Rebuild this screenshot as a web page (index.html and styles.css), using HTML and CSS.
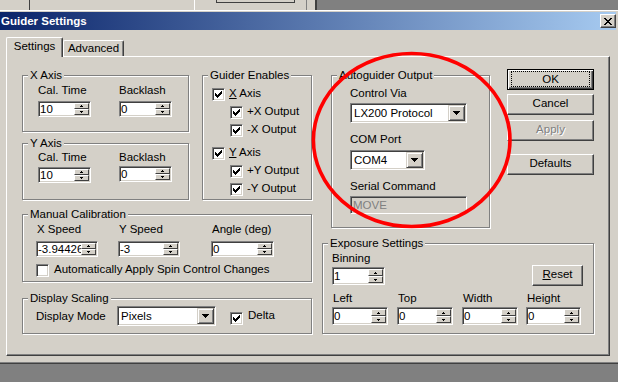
FILE: index.html
```html
<!DOCTYPE html>
<html>
<head>
<meta charset="utf-8">
<title>Guider Settings</title>
<link rel="stylesheet" href="styles.css">
</head>
<body>
<div class="screen">
  <div class="bgwin">
    <div class="bg-face">
      <div class="bg-line dark"></div>
      <div class="bg-text"><span>Camera Not Available</span></div>
      <div class="bg-line white"></div>
      <div class="bg-btn"></div>
      <div class="bg-fill"></div>
      <div class="bg-line gray"></div>
    </div>
    <div class="bg-gap"></div>
    <div class="bg-edge"></div>
  </div>

  <div class="dialog">
    <div class="titlebar">
      <span class="title">Guider Settings</span>
      <div class="close"><svg width="8" height="7" viewBox="0 0 8 7" shape-rendering="crispEdges"><path d="M0 0h2v1h-2z M6 0h2v1h-2z M1 1h2v1h-2z M5 1h2v1h-2z M2 2h4v1h-4z M3 3h2v1h-2z M2 4h4v1h-4z M1 5h2v1h-2z M5 5h2v1h-2z M0 6h2v1h-2z M6 6h2v1h-2z" fill="#000"/></svg></div>
    </div>
    <div class="dlgbody">
      <div class="tabs">
        <div class="tab active">Settings</div>
        <div class="tab other">Advanced</div>
      </div>
      <div class="panel">
        <div class="leftcol">
          <div class="row1">
            <div class="axiscol">
              <div class="group g-x">
                <div class="legend">X Axis</div>
                <div class="pair-grid">
                  <div class="field">
                    <div class="lbl">Cal. Time</div>
                    <div class="spin"><span class="val">10</span><span class="sbtns"><span class="sb up"></span><span class="sb dn"></span></span></div>
                  </div>
                  <div class="field">
                    <div class="lbl">Backlash</div>
                    <div class="spin"><span class="val">0</span><span class="sbtns"><span class="sb up"></span><span class="sb dn"></span></span></div>
                  </div>
                </div>
              </div>
              <div class="group g-y">
                <div class="legend">Y Axis</div>
                <div class="pair-grid">
                  <div class="field">
                    <div class="lbl">Cal. Time</div>
                    <div class="spin"><span class="val">10</span><span class="sbtns"><span class="sb up"></span><span class="sb dn"></span></span></div>
                  </div>
                  <div class="field">
                    <div class="lbl">Backlash</div>
                    <div class="spin up1"><span class="val">0</span><span class="sbtns"><span class="sb up"></span><span class="sb dn"></span></span></div>
                  </div>
                </div>
              </div>
            </div>
            <div class="group g-enables">
              <div class="legend">Guider Enables</div>
              <div class="chkrow first"><span class="chk"><svg width="7" height="7" viewBox="0 0 7 7" shape-rendering="crispEdges"><path d="M6 0h1v1h-1z M5 1h2v1h-2z M0 2h1v1h-1z M4 2h3v1h-3z M0 3h2v1h-2z M3 3h3v1h-3z M0 4h5v1h-5z M1 5h3v1h-3z M2 6h1v1h-1z" fill="#000"/></svg></span><span class="ctext"><u>X</u> Axis</span></div>
              <div class="chkrow sub"><span class="chk"><svg width="7" height="7" viewBox="0 0 7 7" shape-rendering="crispEdges"><path d="M6 0h1v1h-1z M5 1h2v1h-2z M0 2h1v1h-1z M4 2h3v1h-3z M0 3h2v1h-2z M3 3h3v1h-3z M0 4h5v1h-5z M1 5h3v1h-3z M2 6h1v1h-1z" fill="#000"/></svg></span><span class="ctext">+X Output</span></div>
              <div class="chkrow sub"><span class="chk"><svg width="7" height="7" viewBox="0 0 7 7" shape-rendering="crispEdges"><path d="M6 0h1v1h-1z M5 1h2v1h-2z M0 2h1v1h-1z M4 2h3v1h-3z M0 3h2v1h-2z M3 3h3v1h-3z M0 4h5v1h-5z M1 5h3v1h-3z M2 6h1v1h-1z" fill="#000"/></svg></span><span class="ctext">-X Output</span></div>
              <div class="chkrow ygap"><span class="chk"><svg width="7" height="7" viewBox="0 0 7 7" shape-rendering="crispEdges"><path d="M6 0h1v1h-1z M5 1h2v1h-2z M0 2h1v1h-1z M4 2h3v1h-3z M0 3h2v1h-2z M3 3h3v1h-3z M0 4h5v1h-5z M1 5h3v1h-3z M2 6h1v1h-1z" fill="#000"/></svg></span><span class="ctext"><u>Y</u> Axis</span></div>
              <div class="chkrow sub"><span class="chk"><svg width="7" height="7" viewBox="0 0 7 7" shape-rendering="crispEdges"><path d="M6 0h1v1h-1z M5 1h2v1h-2z M0 2h1v1h-1z M4 2h3v1h-3z M0 3h2v1h-2z M3 3h3v1h-3z M0 4h5v1h-5z M1 5h3v1h-3z M2 6h1v1h-1z" fill="#000"/></svg></span><span class="ctext">+Y Output</span></div>
              <div class="chkrow sub"><span class="chk"><svg width="7" height="7" viewBox="0 0 7 7" shape-rendering="crispEdges"><path d="M6 0h1v1h-1z M5 1h2v1h-2z M0 2h1v1h-1z M4 2h3v1h-3z M0 3h2v1h-2z M3 3h3v1h-3z M0 4h5v1h-5z M1 5h3v1h-3z M2 6h1v1h-1z" fill="#000"/></svg></span><span class="ctext">-Y Output</span></div>
            </div>
          </div>

          <div class="group g-manual">
            <div class="legend">Manual Calibration</div>
            <div class="tri-grid">
              <div class="field">
                <div class="lbl">X Speed</div>
                <div class="spin w62"><span class="val">-3.94426</span><span class="sbtns"><span class="sb up"></span><span class="sb dn"></span></span></div>
              </div>
              <div class="field">
                <div class="lbl">Y Speed</div>
                <div class="spin w62"><span class="val">-3</span><span class="sbtns"><span class="sb up"></span><span class="sb dn"></span></span></div>
              </div>
              <div class="field">
                <div class="lbl">Angle (deg)</div>
                <div class="spin w63"><span class="val">0</span><span class="sbtns"><span class="sb up"></span><span class="sb dn"></span></span></div>
              </div>
            </div>
            <div class="chkrow auto"><span class="chk"></span><span class="ctext">Automatically Apply Spin Control Changes</span></div>
          </div>

          <div class="group g-display">
            <div class="legend">Display Scaling</div>
            <div class="disp-row">
              <div class="lbl">Display Mode</div>
              <div class="combo w99"><span class="cval">Pixels</span><span class="cbtn"><svg width="7" height="4" viewBox="0 0 7 4" shape-rendering="crispEdges"><path d="M0 0h7v1h-1v1h-1v1h-1v1h-1v-1h-1v-1h-1v-1h-1z" fill="#000"/></svg></span></div>
              <div class="chkrow delta"><span class="chk"><svg width="7" height="7" viewBox="0 0 7 7" shape-rendering="crispEdges"><path d="M6 0h1v1h-1z M5 1h2v1h-2z M0 2h1v1h-1z M4 2h3v1h-3z M0 3h2v1h-2z M3 3h3v1h-3z M0 4h5v1h-5z M1 5h3v1h-3z M2 6h1v1h-1z" fill="#000"/></svg></span><span class="ctext">Delta</span></div>
            </div>
          </div>
        </div>

        <div class="rightcol">
          <div class="righttop">
            <div class="group g-auto">
              <div class="legend">Autoguider Output</div>
              <div class="lbl l1">Control Via</div>
              <div class="combo w117 c1"><span class="cval">LX200 Protocol</span><span class="cbtn"><svg width="7" height="4" viewBox="0 0 7 4" shape-rendering="crispEdges"><path d="M0 0h7v1h-1v1h-1v1h-1v1h-1v-1h-1v-1h-1v-1h-1z" fill="#000"/></svg></span></div>
              <div class="lbl l2">COM Port</div>
              <div class="combo w75 c2"><span class="cval">COM4</span><span class="cbtn"><svg width="7" height="4" viewBox="0 0 7 4" shape-rendering="crispEdges"><path d="M0 0h7v1h-1v1h-1v1h-1v1h-1v-1h-1v-1h-1v-1h-1z" fill="#000"/></svg></span></div>
              <div class="lbl l3">Serial Command</div>
              <div class="edit disabled">MOVE</div>
            </div>
            <div class="buttons">
              <div class="btn default"><span class="focus">OK</span></div>
              <div class="btn cancel">Cancel</div>
              <div class="btn apply disabled">Apply</div>
              <div class="btn defaults">Defaults</div>
            </div>
          </div>

          <div class="group g-exp">
            <div class="legend">Exposure Settings</div>
            <div class="lbl">Binning</div>
            <div class="bin-row">
              <div class="spin h18 w53"><span class="val">1</span><span class="sbtns"><span class="sb up"></span><span class="sb dn"></span></span></div>
              <div class="btn reset"><u>R</u>eset</div>
            </div>
            <div class="quad-grid">
              <div class="field">
                <div class="lbl">Left</div>
                <div class="spin h18 w56"><span class="val">0</span><span class="sbtns"><span class="sb up"></span><span class="sb dn"></span></span></div>
              </div>
              <div class="field">
                <div class="lbl">Top</div>
                <div class="spin h18 w56"><span class="val">0</span><span class="sbtns"><span class="sb up"></span><span class="sb dn"></span></span></div>
              </div>
              <div class="field">
                <div class="lbl">Width</div>
                <div class="spin h18 w56"><span class="val">0</span><span class="sbtns"><span class="sb up"></span><span class="sb dn"></span></span></div>
              </div>
              <div class="field">
                <div class="lbl">Height</div>
                <div class="spin h18 w55"><span class="val">0</span><span class="sbtns"><span class="sb up"></span><span class="sb dn"></span></span></div>
              </div>
            </div>
          </div>
        </div>
      </div>
    </div>
  </div>

  <svg class="annot" width="618" height="382" viewBox="0 0 618 382"><ellipse cx="411.7" cy="140" rx="98.3" ry="86.5" fill="none" stroke="#ff0000" stroke-width="3.6"/></svg>
</div>
</body>
</html>
```

FILE: styles.css
```css
* { box-sizing: border-box; }
html, body { margin: 0; padding: 0; }
body {
  width: 618px;
  height: 382px;
  overflow: hidden;
  background: #808080;
  font-family: "Liberation Sans", Arial, sans-serif;
  font-size: 11.5px;
  color: #000;
}
.screen { position: relative; width: 618px; height: 382px; }

/* background window strip */
.bgwin { display: flex; height: 10px; }
.bg-face { display: flex; width: 307px; background: #d4d0c8; }
.bg-line { width: 1px; flex: none; }
.bg-line.dark { margin-left: 29px; background: #404040; }
.bg-line.white { background: #fff; }
.bg-line.gray { background: #808080; }
.bg-text { width: 164px; height: 10px; overflow: hidden; }
.bg-text span { display: block; margin: -12px 0 0 2px; line-height: 12px; white-space: nowrap; }
.bg-btn { width: 79px; height: 3px; margin-left: 21px; border: 1px solid #404040; border-top: 0; }
.bg-fill { flex: 1; }
.bg-gap { width: 8px; background: #d4d0c8; }
.bg-edge { width: 2px; background: #404040; }

/* dialog frame */
.dialog {
  width: 618px;
  background: #d4d0c8;
  border-top: 1px solid #fff;
  padding-top: 1px;
  border-bottom: 1px solid #404040;
  box-shadow: inset 0 -1px 0 #808080;
}
.titlebar {
  width: 616px;
  height: 18px;
  display: flex;
  align-items: center;
  justify-content: space-between;
  padding-left: 1px;
  background: linear-gradient(to right, #0a246a, #a6caf0);
}
.title { color: #fff; font-weight: bold; font-size: 11.5px; }
.close {
  width: 16px;
  height: 14px;
  background: #d4d0c8;
  border: 1px solid;
  border-color: #fff #404040 #404040 #fff;
  box-shadow: inset -1px -1px 0 #808080;
  display: flex;
  align-items: center;
  justify-content: center;
}
.close svg { display: block; margin-left: -1px; }

.dlgbody { padding: 7px 0 7px 6px; }

/* tabs */
.tabs { display: flex; align-items: flex-end; height: 19px; position: relative; z-index: 1; }
.tab {
  height: 16px;
  border: 1px solid #fff;
  border-bottom: 0;
  border-right-color: #404040;
  box-shadow: inset -1px 0 0 #808080;
  border-radius: 2px 2px 0 0;
  text-align: center;
  line-height: 14px;
  background: #d4d0c8;
}
.tab.active { width: 57px; height: 20px; margin-bottom: -1px; padding-top: 1px; }
.tab.other { width: 61px; }

/* panel */
.panel {
  width: 604px;
  height: 300px;
  border: 1px solid;
  border-color: #fff #404040 #404040 #fff;
  box-shadow: inset -1px -1px 0 #808080;
  padding: 12px 0 0 15px;
  display: flex;
  align-items: flex-start;
}

/* group boxes */
.group {
  border: 1px solid #808080;
  box-shadow: inset 1px 1px 0 #fff, 1px 1px 0 #fff;
}
.legend {
  width: fit-content;
  margin: -8px 0 0 5px;
  padding: 0 2px;
  height: 14px;
  line-height: 14px;
  background: #d4d0c8;
  white-space: nowrap;
}
.lbl { line-height: 14px; white-space: nowrap; }

.leftcol { width: 290px; margin-top: 6px; display: flex; flex-direction: column; }
.row1 { display: flex; gap: 13px; }
.axiscol { width: 167px; display: flex; flex-direction: column; gap: 11px; }
.g-x, .g-y { height: 57px; }
.pair-grid { display: grid; grid-template-columns: 81px 53px; padding-left: 15px; margin-top: 1px; }
.pair-grid .spin { width: 53px; margin-top: 4px; }
.g-y .pair-grid { margin-top: 0; }
.g-y .pair-grid .spin { margin-top: 3px; }
.g-y .pair-grid .spin.up1 { margin-top: 2px; }

.g-enables { width: 110px; height: 125px; padding-left: 9px; }
.g-enables .legend { margin-left: -4px; }
.chkrow { display: flex; align-items: flex-start; height: 18px; gap: 4px; }
.chkrow .chk { margin-top: 2px; }
.ctext { line-height: 14px; white-space: nowrap; }
.chkrow.first { margin-top: 4px; }
.chkrow.sub { padding-left: 18px; }
.chkrow.ygap { margin-top: 5px; }

.g-manual { height: 68px; margin-top: 14px; padding-left: 13px; }
.g-manual .legend { margin-left: -8px; }
.tri-grid { display: grid; grid-template-columns: 82px 93px 63px; margin-top: 1px; }
.tri-grid .lbl { padding-left: 1px; }
.tri-grid .spin { margin-top: 5px; }
.chkrow.auto { margin-top: 5px; gap: 5px; }

.g-display { height: 36px; margin-top: 16px; padding-left: 13px; }
.g-display .legend { margin-left: -8px; }
.disp-row { display: flex; align-items: flex-start; margin-top: 1px; }
.disp-row .lbl { width: 81px; line-height: 20px; }
.chkrow.delta { margin: 2px 0 0 14px; gap: 5px; }
.chkrow.delta .chk { margin-top: 4px; }

.rightcol { width: 272px; margin-left: 10px; display: flex; flex-direction: column; }
.righttop { display: flex; align-items: flex-start; }
.g-auto { width: 159px; height: 153px; margin: 6px 0 0 9px; padding-left: 18px; }
.g-auto .legend { margin-left: -13px; }
.g-auto .l1 { margin-top: 4px; }
.g-auto .c1 { margin-top: 3px; }
.g-auto .l2 { margin-top: 9px; }
.g-auto .c2 { margin-top: 4px; }
.g-auto .l3 { margin-top: 9px; }
.g-auto .edit { margin-top: 3px; width: 117px; }

.buttons { width: 87px; margin-left: 17px; display: flex; flex-direction: column; }
.btn {
  height: 21px;
  width: 87px;
  background: #d4d0c8;
  border: 1px solid;
  border-color: #fff #404040 #404040 #fff;
  box-shadow: inset -1px -1px 0 #808080;
  text-align: center;
  line-height: 17px;
  white-space: nowrap;
}
.btn.default {
  border-color: #000;
  box-shadow: inset 1px 1px 0 #fff, inset -1px -1px 0 #404040, inset -2px -2px 0 #808080;
  padding: 1px 3px 2px 3px;
}
.btn .focus { display: block; height: 100%; border: 1px dotted #000; line-height: 14px; }
.btn.cancel { margin-top: 4px; }
.btn.apply { margin-top: 5px; }
.btn.defaults { margin-top: 13px; }
.btn.disabled { color: #808080; text-shadow: 1px 1px 0 #fff; }
.btn.reset { width: 51px; }

.g-exp { height: 91px; margin-top: 15px; padding: 0 10px 0 9px; }
.g-exp .legend { margin-left: -4px; }
.g-exp > .lbl { margin-top: 1px; }
.bin-row { display: flex; align-items: flex-start; justify-content: space-between; height: 21px; }
.bin-row .spin { margin-top: 2px; }
.quad-grid { display: grid; grid-template-columns: 65px 65px 64px 56px; margin-top: 5px; }
.quad-grid .lbl { padding-left: 1px; }
.quad-grid .spin { margin-top: 2px; }

/* controls */
.spin {
  display: flex;
  height: 16px;
  border: 1px solid;
  border-color: #808080 #fff #fff #808080;
  box-shadow: inset 1px 1px 0 #404040, inset -1px -1px 0 #d4d0c8;
  background: #fff;
  padding: 1px;
}
.spin.h18 { height: 18px; }
.spin .val { flex: 1; min-width: 0; line-height: 12px; overflow: hidden; white-space: nowrap; }
.spin.h18 .val { line-height: 14px; }
.sbtns { width: 15px; flex: none; display: flex; flex-direction: column; }
.sb {
  flex: 1;
  background: #d4d0c8;
  border: 1px solid;
  border-color: #fff #404040 #404040 #fff;
  display: flex;
  align-items: center;
  justify-content: center;
}
.sb::after { content: ""; width: 1px; height: 1px; background: #000; }
.sb.up::after { box-shadow: -1px 1px 0 #000, 0 1px 0 #000, 1px 1px 0 #000; margin-top: -1px; }
.sb.dn::after { box-shadow: -1px -1px 0 #000, 0 -1px 0 #000, 1px -1px 0 #000; margin-top: 1px; }
.w53 { width: 53px; }
.w55 { width: 55px; }
.w56 { width: 56px; }
.w62 { width: 62px; }
.w63 { width: 63px; }

.combo {
  display: flex;
  height: 20px;
  border: 1px solid;
  border-color: #808080 #fff #fff #808080;
  box-shadow: inset 1px 1px 0 #404040, inset -1px -1px 0 #d4d0c8;
  background: #fff;
  padding: 1px;
}
.combo .cval { flex: 1; padding-left: 2px; line-height: 16px; white-space: nowrap; overflow: hidden; }
.cbtn {
  width: 17px;
  flex: none;
  background: #d4d0c8;
  border: 1px solid;
  border-color: #d4d0c8 #404040 #404040 #d4d0c8;
  box-shadow: inset 1px 1px 0 #fff, inset -1px -1px 0 #808080;
  display: flex;
  align-items: center;
  justify-content: center;
}
.cbtn svg { display: block; }
.w75 { width: 75px; }
.w99 { width: 99px; }
.w117 { width: 117px; }

.edit {
  height: 18px;
  border: 1px solid;
  border-color: #808080 #fff #fff #808080;
  box-shadow: inset 1px 1px 0 #404040, inset -1px -1px 0 #d4d0c8;
  padding: 1px 2px;
  line-height: 14px;
  white-space: nowrap;
}
.edit.disabled { background: #d4d0c8; color: #808080; }

.chk {
  width: 13px;
  height: 13px;
  flex: none;
  background: #fff;
  border: 1px solid;
  border-color: #808080 #fff #fff #808080;
  box-shadow: inset 1px 1px 0 #404040, inset -1px -1px 0 #d4d0c8;
  display: flex;
  align-items: center;
  justify-content: center;
}
.chk svg { display: block; }

.annot { position: absolute; left: 0; top: 0; pointer-events: none; }
```
